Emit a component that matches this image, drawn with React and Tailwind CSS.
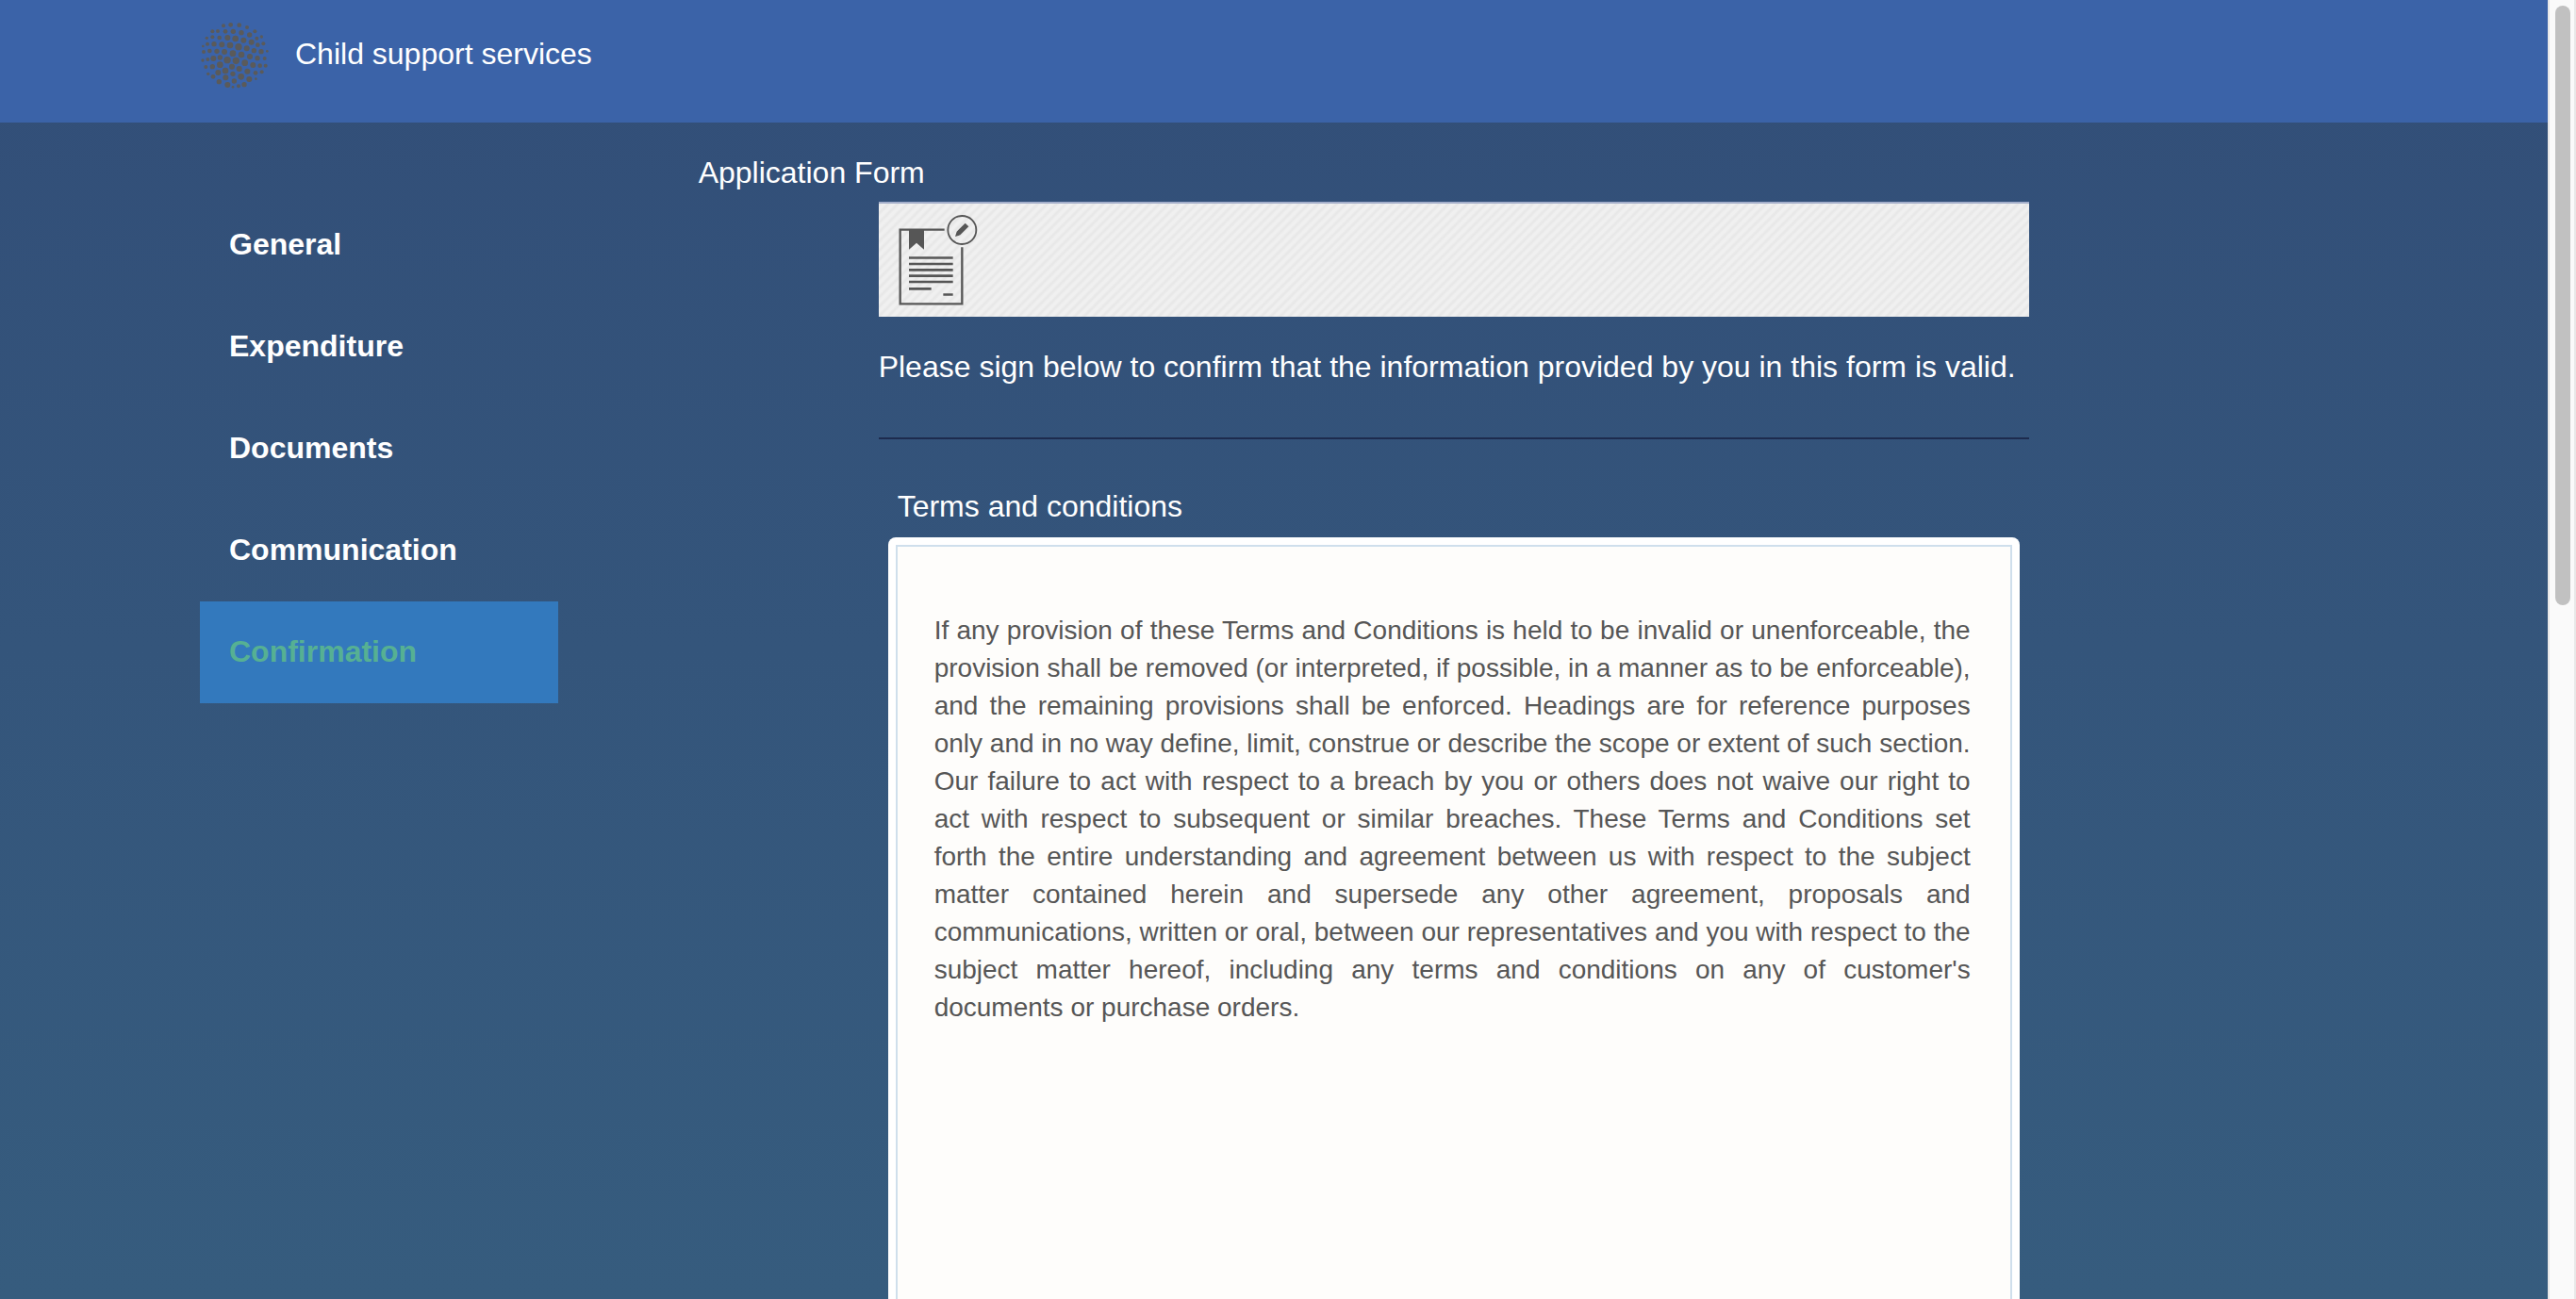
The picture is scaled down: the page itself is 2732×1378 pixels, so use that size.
const NAV = ["General", "Expenditure", "Documents", "Communication", "Confirmation"];

const TERMS =
  "If any provision of these Terms and Conditions is held to be invalid or unenforceable, the provision shall be removed (or interpreted, if possible, in a manner as to be enforceable), and the remaining provisions shall be enforced. Headings are for reference purposes only and in no way define, limit, construe or describe the scope or extent of such section. Our failure to act with respect to a breach by you or others does not waive our right to act with respect to subsequent or similar breaches. These Terms and Conditions set forth the entire understanding and agreement between us with respect to the subject matter contained herein and supersede any other agreement, proposals and communications, written or oral, between our representatives and you with respect to the subject matter hereof, including any terms and conditions on any of customer's documents or purchase orders.";

// Each dot of the round logo: x, y, radius.
const DOTS = [
  [138, 82, 6], [161, 79, 7], [188, 80, 7], [213, 87, 6],
  [103, 100, 6], [120, 99, 6], [144, 100, 7], [169, 100, 8], [195, 104, 8], [221, 111, 8], [238, 100, 6],
  [85, 121, 5], [103, 118, 6], [125, 120, 7], [151, 120, 9], [176, 123, 10], [202, 128, 9], [227, 134, 9], [244, 122, 6], [259, 117, 5],
  [73, 147, 4], [87, 140, 6], [108, 140, 8], [133, 142, 9], [159, 144, 10], [186, 149, 11], [212, 154, 9], [247, 143, 7], [265, 139, 6],
  [75, 165, 6], [94, 162, 7], [117, 163, 8], [141, 165, 9], [168, 170, 10], [195, 174, 10], [235, 161, 8], [258, 164, 8], [277, 163, 4],
  [72, 192, 5], [88, 189, 6], [106, 186, 9], [127, 183, 8], [150, 191, 11], [178, 193, 11], [222, 180, 9], [246, 185, 8], [269, 186, 6],
  [82, 213, 6], [103, 212, 8], [127, 206, 10], [206, 200, 10], [232, 207, 9], [254, 209, 7], [272, 209, 6],
  [89, 235, 5], [105, 244, 7], [121, 231, 9], [144, 225, 10], [165, 212, 9], [188, 219, 9], [214, 227, 9], [240, 232, 7], [260, 229, 6],
  [124, 260, 8], [145, 247, 9], [168, 235, 8], [194, 244, 10], [220, 252, 9], [241, 251, 4],
  [151, 270, 9], [172, 258, 8], [168, 277, 4], [186, 274, 6], [204, 269, 8],
];

function Logo() {
  return (
    <svg viewBox="63 66 222 222" className="h-[74px] w-[74px] shrink-0" fill="#5a5a5a" aria-hidden="true">
      {DOTS.map(([x, y, r]) => (
        <circle key={`${x}-${y}`} cx={x} cy={y} r={r} />
      ))}
    </svg>
  );
}

function FormIcon() {
  return (
    <svg viewBox="66 48 330 360" className="h-[120px] w-[110px]" fill="none" stroke="#565656" aria-hidden="true">
      <path d="M275 131H134V367H331V187" strokeWidth="7" />
      <path d="M162 131h48v63l-24-21-24 21z" fill="#565656" stroke="none" />
      <path d="M162 220.500h140M162 240h140M162 259h140M162 278h140M162 297h140M162 319h71M271 337.500h31" strokeWidth="8" />
      <circle cx="331" cy="132" r="45" strokeWidth="5.500" />
      <path d="M341 110l11 11-27 27-16 5 5-16z" fill="#565656" stroke="none" />
    </svg>
  );
}

export default function App() {
  return (
    <div className="flex h-screen overflow-hidden font-['Liberation_Sans',Arial,sans-serif] text-[32px] leading-9 text-white">
      <div className="flex min-w-0 flex-1 flex-col bg-linear-to-b from-[#324e78] to-[#365c7e]">
        <header className="flex h-[130px] shrink-0 items-start gap-[27px] bg-[#3b63a8] px-[212px] pt-[22px]">
          <Logo />
          <h1 className="pt-[17px]">Child support services</h1>
        </header>
        <div className="flex min-h-0 flex-1 items-start px-[212px]">
          <nav className="w-1/6 shrink-0 pt-[76px] font-bold">
            {NAV.map((name) => (
              <a
                key={name}
                href="#"
                aria-current={name === "Confirmation" ? "page" : undefined}
                className="block h-[108px] px-[31px] pt-[35px] aria-[current=page]:bg-[#3379bd] aria-[current=page]:text-[#56b093]"
              >
                {name}
              </a>
            ))}
          </nav>
          <main className="ml-[149px] min-w-0 flex-1 pt-[35px]">
            <h2>Application Form</h2>
            <div className="ml-[191px] mt-[13px] max-w-[1220px]">
              <div className="border-t-2 border-[#a3aeca] bg-[#efefef] bg-[repeating-linear-gradient(135deg,#e8e8e8_0px,#e8e8e8_1px,#f0f0f0_3px,#f0f0f0_5px,#e8e8e8_7px)]">
                <FormIcon />
              </div>
              <p className="mt-[35px] whitespace-nowrap">
                Please sign below to confirm that the information provided by you in this form is valid.
              </p>
              <hr className="mt-[57px] border-t-2 border-[#1d2b4e]" />
              <section className="mx-[10px] mt-[53px]">
                <h3 id="terms" className="px-[10px]">Terms and conditions</h3>
                <div aria-labelledby="terms" className="mt-[15px] rounded-lg bg-white p-2">
                  <div className="h-[1000px] border-2 border-[#cfdfec] bg-[#fefdfb] pl-[39px] pr-[42px] pt-[69px]">
                    <p className="text-justify text-[28px] leading-10 text-[#565656]">{TERMS}</p>
                  </div>
                </div>
              </section>
            </div>
          </main>
        </div>
      </div>
      <div className="w-[30px] shrink-0 border-x-2 border-[#e8e8e8] bg-[#fafafa] px-[6px] pt-[6px]">
        <div className="h-[636px] w-4 rounded-full bg-[#c1c1c1]" />
      </div>
    </div>
  );
}
